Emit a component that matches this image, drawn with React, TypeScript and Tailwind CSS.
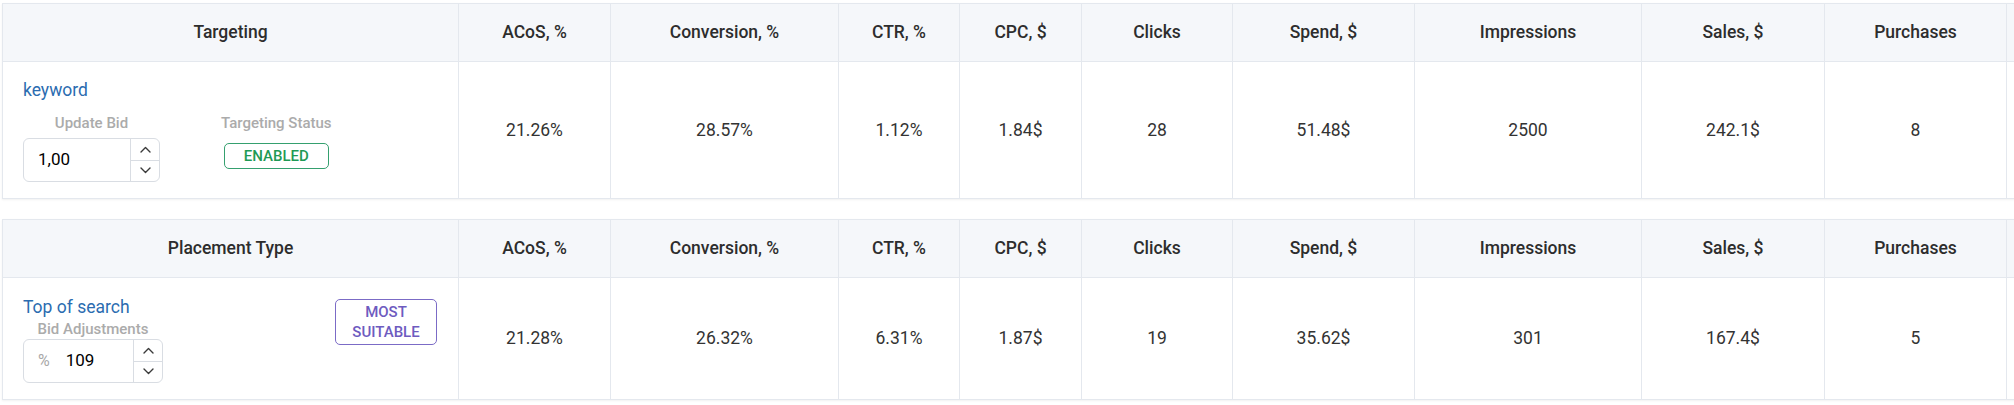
import type { ReactNode } from "react";

type Row = {
  metrics: string[];
};

const HEADERS = [
  "ACoS, %",
  "Conversion, %",
  "CTR, %",
  "CPC, $",
  "Clicks",
  "Spend, $",
  "Impressions",
  "Sales, $",
  "Purchases",
];

const TARGETING: Row = {
  metrics: ["21.26%", "28.57%", "1.12%", "1.84$", "28", "51.48$", "2500", "242.1$", "8"],
};

const PLACEMENT: Row = {
  metrics: ["21.28%", "26.32%", "6.31%", "1.87$", "19", "35.62$", "301", "167.4$", "5"],
};

function Chevron({ up }: { up?: boolean }) {
  return (
    <svg width="11" height="7" viewBox="0 0 11 7" fill="none">
      <polyline
        points={up ? "1,6 5.5,1.5 10,6" : "1,1 5.5,5.5 10,1"}
        stroke="#3a3a3a"
        strokeWidth="1.4"
        strokeLinecap="round"
        strokeLinejoin="round"
      />
    </svg>
  );
}

function NumberInput({ value, prefix, width }: { value: string; prefix?: string; width: string }) {
  return (
    <div className={`flex h-[44px] ${width} rounded-md border border-[#d9dde3] bg-white`}>
      <div className="flex flex-1 items-center pl-[14px] text-[17px] text-black">
        {prefix && <span className="mr-[16px] text-[16px] text-[#a8a8a8]">{prefix}</span>}
        {value}
      </div>
      <div className="flex w-[29px] flex-col border-l border-[#d9dde3]">
        <div className="flex flex-1 items-center justify-center border-b border-[#d9dde3]">
          <Chevron up />
        </div>
        <div className="flex flex-1 items-center justify-center">
          <Chevron />
        </div>
      </div>
    </div>
  );
}

function Label({ children }: { children: ReactNode }) {
  return (
    <div className="text-center text-[15px] leading-5 font-medium text-[#ababab]">{children}</div>
  );
}

function Table({ title, first, row }: { title: string; first: ReactNode; row: Row }) {
  const cols =
    "grid-cols-[456px_152px_228px_121px_122px_151px_182px_227px_183px_182px_150px]";
  return (
    <div
      className={`grid w-max ${cols} border-t border-l border-[#e4e8ee] shadow-[0_1px_2px_rgba(0,0,0,0.06)]`}
    >
      <div className="flex h-[58px] items-center justify-center border-r border-b border-[#e4e8ee] bg-[#f5f7fa] text-[17.5px] font-medium text-[#2d2d2d]">
        {title}
      </div>
      {HEADERS.map((h) => (
        <div
          key={h}
          className="flex h-[58px] items-center justify-center border-r border-b border-[#e4e8ee] bg-[#f5f7fa] text-[17.5px] font-medium text-[#2d2d2d]"
        >
          {h}
        </div>
      ))}
      <div className="h-[58px] border-b border-[#e4e8ee] bg-[#f5f7fa]" />

      <div className="border-r border-b border-[#e4e8ee] bg-white">{first}</div>
      {row.metrics.map((m, i) => (
        <div
          key={i}
          className="flex items-center justify-center border-r border-b border-[#e4e8ee] bg-white text-[17.5px] text-[#333]"
        >
          {m}
        </div>
      ))}
      <div className="border-b border-[#e4e8ee] bg-white" />
    </div>
  );
}

export default function App() {
  return (
    <div className="h-screen overflow-hidden bg-white pt-[3px] pl-[2px] font-['Roboto',sans-serif]">
      <div className="flex flex-col gap-5">
        <Table
          title="Targeting"
          row={TARGETING}
          first={
            <div className="px-5 pt-4 pb-4">
              <div className="text-[17.5px] leading-6 text-[#2b6cb0]">keyword</div>
              <div className="mt-[11px] flex items-start gap-[61px]">
                <div className="flex w-[137px] flex-col">
                  <Label>Update Bid</Label>
                  <div className="mt-[5px]">
                    <NumberInput value="1,00" width="w-[137px]" />
                  </div>
                </div>
                <div className="flex flex-col items-center">
                  <Label>Targeting Status</Label>
                  <div className="mt-[10px] flex h-[26px] w-[105px] items-center justify-center rounded-[5px] border border-[#35a06f] text-[15px] font-medium text-[#1f9a55]">
                    ENABLED
                  </div>
                </div>
              </div>
            </div>
          }
        />
        <Table
          title="Placement Type"
          row={PLACEMENT}
          first={
            <div className="flex items-start justify-between px-5 pt-[17px] pb-4">
              <div className="flex flex-col">
                <div className="text-[17.5px] leading-6 text-[#2b6cb0]">Top of search</div>
                <div className="flex w-[140px] flex-col">
                  <Label>Bid Adjustments</Label>
                  <NumberInput value="109" prefix="%" width="w-[140px]" />
                </div>
              </div>
              <div className="mt-1 mr-px flex w-[102px] flex-col items-center rounded-[5px] border border-[#7b6bc6] py-[2px] text-[15px] leading-5 font-medium text-[#6e5bbf]">
                <span>MOST</span>
                <span>SUITABLE</span>
              </div>
            </div>
          }
        />
      </div>
    </div>
  );
}
